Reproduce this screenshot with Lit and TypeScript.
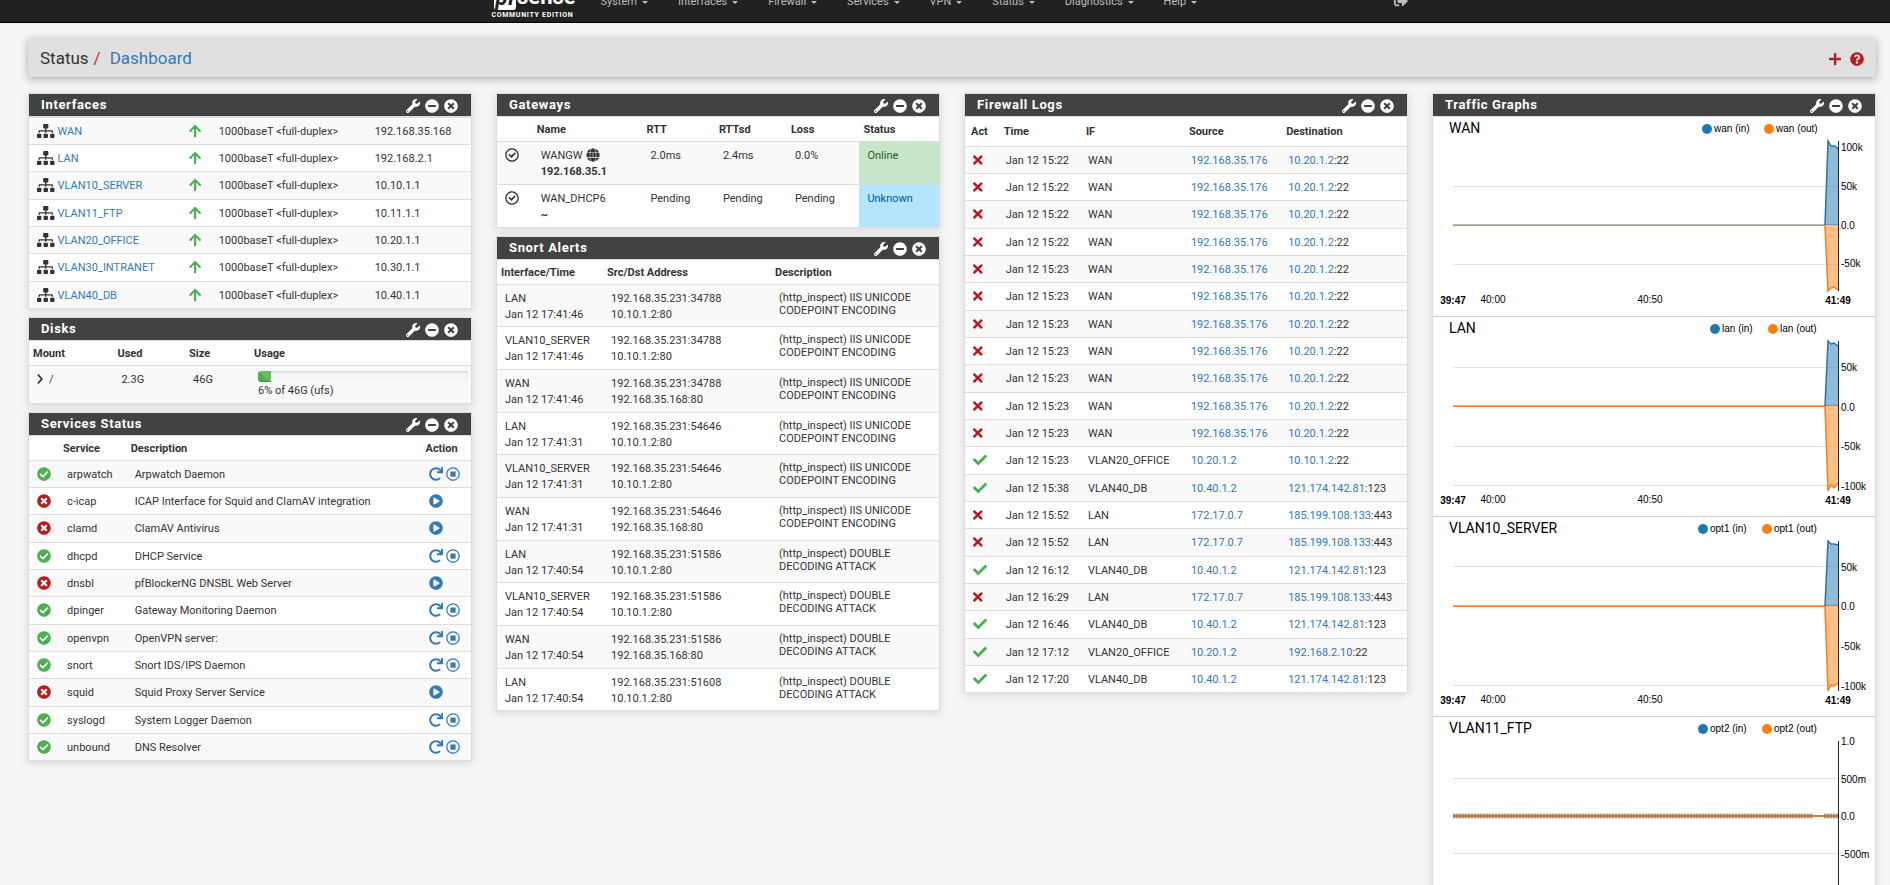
import { LitElement, html, svg, css } from "lit";
import { customElement, property } from "lit/decorators.js";

const CIRCLE = "M256 8C119 8 8 119 8 256s111 248 248 248 248-111 248-248S393 8 256 8z";

const ICONS: Record<string, { w: number; d: string }> = {
  wrench: {
    w: 512,
    d: "M507.73 109.1c-2.24-9.03-13.54-12.09-20.12-5.51l-74.36 74.36-67.88-11.31-11.31-67.88 74.36-74.36c6.62-6.62 3.43-17.9-5.66-20.16-47.38-11.74-99.55.91-136.58 37.93-39.64 39.64-50.55 97.1-34.05 147.2L18.74 402.76c-24.99 24.99-24.99 65.51 0 90.5 24.99 24.99 65.51 24.99 90.5 0l213.21-213.21c50.12 16.71 107.47 5.68 147.37-34.22 37.07-37.07 49.7-89.32 37.91-136.73zM64 472c-13.25 0-24-10.75-24-24 0-13.26 10.75-24 24-24s24 10.74 24 24c0 13.25-10.75 24-24 24z",
  },
  minus: {
    w: 512,
    d: CIRCLE + "M124 296c-6.6 0-12-5.4-12-12v-56c0-6.6 5.4-12 12-12h264c6.6 0 12 5.4 12 12v56c0 6.6-5.4 12-12 12H124z",
  },
  stopped: {
    w: 512,
    d: "M256 8C119 8 8 119 8 256s111 248 248 248 248-111 248-248S393 8 256 8zm121.6 313.1c4.7 4.7 4.7 12.3 0 17L338 377.6c-4.7 4.7-12.3 4.7-17 0L256 312l-65.1 65.6c-4.7 4.7-12.3 4.7-17 0L134.4 338c-4.7-4.7-4.7-12.3 0-17l65.6-65-65.6-65.1c-4.7-4.7-4.7-12.3 0-17l39.6-39.6c4.7-4.7 12.3-4.7 17 0l65 65.7 65.1-65.6c4.7-4.7 12.3-4.7 17 0l39.6 39.6c4.7 4.7 4.7 12.3 0 17L312 256l65.6 65.1z",
  },
  running: {
    w: 512,
    d: "M504 256c0 136.967-111.033 248-248 248S8 392.967 8 256 119.033 8 256 8s248 111.033 248 248zM227.314 387.314l184-184c6.248-6.248 6.248-16.379 0-22.627l-22.627-22.627c-6.248-6.249-16.379-6.249-22.628 0L216 308.118l-70.059-70.059c-6.248-6.248-16.379-6.248-22.628 0l-22.627 22.627c-6.248 6.248-6.248 16.379 0 22.627l104 104c6.249 6.249 16.379 6.249 22.628.001z",
  },
  sitemap: {
    w: 640,
    d: "M128 352H32c-17.67 0-32 14.33-32 32v96c0 17.67 14.33 32 32 32h96c17.67 0 32-14.33 32-32v-96c0-17.67-14.33-32-32-32zm-24-80h192v48h48v-48h192v48h48v-57.59c0-21.17-17.23-38.41-38.41-38.41H344v-64h40c17.67 0 32-14.33 32-32V32c0-17.67-14.33-32-32-32H256c-17.67 0-32 14.33-32 32v96c0 17.67 14.33 32 32 32h40v64H94.41C73.23 224 56 241.23 56 262.41V320h48v-48zm264 80h-96c-17.67 0-32 14.33-32 32v96c0 17.67 14.33 32 32 32h96c17.67 0 32-14.33 32-32v-96c0-17.67-14.33-32-32-32zm240 0h-96c-17.67 0-32 14.33-32 32v96c0 17.67 14.33 32 32 32h96c17.67 0 32-14.33 32-32v-96c0-17.67-14.33-32-32-32z",
  },
  up: {
    w: 448,
    d: "M34.9 289.5l-22.2-22.2c-9.4-9.4-9.4-24.6 0-33.9L207 39c9.4-9.4 24.6-9.4 33.9 0l194.3 194.3c9.4 9.4 9.4 24.6 0 33.9L413 289.4c-9.5 9.5-25 9.3-34.3-.4L264 168.6V456c0 13.3-10.7 24-24 24h-32c-13.3 0-24-10.7-24-24V168.6L69.2 289.1c-9.3 9.8-24.8 10-34.3.4z",
  },
  times: {
    w: 352,
    d: "M242.72 256l100.07-100.07c12.28-12.28 12.28-32.19 0-44.48l-22.24-22.24c-12.28-12.28-32.19-12.28-44.48 0L176 189.28 75.93 89.21c-12.28-12.28-32.19-12.28-44.48 0L9.21 111.45c-12.28 12.28-12.28 32.19 0 44.48L109.28 256 9.21 356.07c-12.28 12.28-12.28 32.19 0 44.48l22.24 22.24c12.28 12.28 32.2 12.28 44.48 0L176 322.72l100.07 100.07c12.28 12.28 32.2 12.28 44.48 0l22.24-22.24c12.28-12.28 12.28-32.19 0-44.48L242.72 256z",
  },
  check: {
    w: 512,
    d: "M173.898 439.404l-166.4-166.4c-9.997-9.997-9.997-26.206 0-36.204l36.203-36.204c9.997-9.998 26.207-9.998 36.204 0L192 312.69 432.095 72.596c9.997-9.997 26.207-9.997 36.204 0l36.203 36.204c9.997 9.997 9.997 26.206 0 36.204l-294.4 294.401c-9.998 9.997-26.207 9.997-36.204-.001z",
  },
  redo: {
    w: 512,
    d: "M500.33 0h-47.41a12 12 0 0 0-12 12.57l4 82.76A247.42 247.42 0 0 0 256 8C119.34 8 7.9 119.53 8 256.19 8.1 393.07 119.1 504 256 504a247.1 247.1 0 0 0 166.18-63.91 12 12 0 0 0 .48-17.43l-34-34a12 12 0 0 0-16.38-.55A176 176 0 1 1 402.1 157.8l-101.53-4.87a12 12 0 0 0-12.57 12v47.41a12 12 0 0 0 12 12h200.33a12 12 0 0 0 12-12V12a12 12 0 0 0-12-12z",
  },
  stop: {
    w: 512,
    d: CIRCLE + "M256 52a204 204 0 1 1 0 408a204 204 0 1 1 0-408zM176 160h160q16 0 16 16v160q0 16-16 16H176q-16 0-16-16V176q0-16 16-16z",
  },
  play: {
    w: 512,
    d: "M371.7 238l-176-107c-15.8-8.8-35.7 2.5-35.7 21v208c0 18.4 19.8 29.8 35.7 21l176-101c16.4-9.1 16.4-32.8 0-42zM504 256C504 119 393 8 256 8S8 119 8 256s111 248 248 248 248-111 248-248z",
  },
  enabled: {
    w: 512,
    d: CIRCLE + "M256 56a200 200 0 1 1 0 400a200 200 0 1 1 0-400zM232 358L130 256q-8-9 0-17l24-23q9-8 17 0l62 62 115-114q9-8 17 0l23 23q8 9 0 17L249 358q-9 8-17 0z",
  },
  globe: {
    w: 512,
    d: "M138 160q10-88 52-144Q78 56 33 160zM356 160Q336 16 256 8q-80 8-100 152zM479 160Q434 56 322 16q42 56 52 144zM486 180H376q4 76 0 152h110q20-76 0-152zM136 256q0-40 3-76H26q-20 76 0 152h113q-3-36-3-76zM156 180q-4 76 0 152h90V180zM266 180v152h90q4-76 0-152zM156 352q20 144 100 152 80-8 100-152zM322 496q112-40 157-144H374q-10 88-52 144zM33 352q45 104 157 144-42-56-52-144z",
  },
  plus: {
    w: 448,
    d: "M416 212H268V64q0-32-32-32h-24q-32 0-32 32v148H32q-32 0-32 32v24q0 32 32 32h148v148q0 32 32 32h24q32 0 32-32V300h148q32 0 32-32v-24q0-32-32-32z",
  },
  help: {
    w: 512,
    d: "M504 256c0 136.997-111.043 248-248 248S8 392.997 8 256C8 119.083 119.043 8 256 8s248 111.083 248 248zM262.655 90c-54.497 0-89.255 22.957-116.549 63.758-3.536 5.286-2.353 12.415 2.715 16.258l34.699 26.31c5.205 3.947 12.621 3.008 16.665-2.122 17.864-22.658 30.113-35.797 57.303-35.797 20.429 0 45.698 13.148 45.698 32.958 0 14.976-12.363 22.667-32.534 33.976C247.128 238.528 216 254.941 216 296v4c0 6.627 5.373 12 12 12h56c6.627 0 12-5.373 12-12v-1.333c0-28.462 83.186-29.647 83.186-106.667 0-58.002-60.165-102-116.531-102zM256 338c-25.365 0-46 20.635-46 46 0 25.364 20.635 46 46 46s46-20.636 46-46c0-25.365-20.635-46-46-46z",
  },
  signout: {
    w: 512,
    d: "M497 273L329 441c-15 15-41 4.5-41-17v-96H152c-13.3 0-24-10.7-24-24v-96c0-13.3 10.7-24 24-24h136V88c0-21.4 25.9-32 41-17l168 168c9.3 9.4 9.3 24.6 0 34zM192 436v-40c0-6.6-5.4-12-12-12H96c-17.7 0-32-14.3-32-32V160c0-17.7 14.3-32 32-32h84c6.6 0 12-5.4 12-12V76c0-6.6-5.4-12-12-12H96c-53 0-96 43-96 96v192c0 53 43 96 96 96h84c6.6 0 12-5.4 12-12z",
  },
  chevron: {
    w: 256,
    d: "M24 76q-14 14 0 28l140 152L24 408q-14 14 0 28l22 22q14 14 28 0l168-186q14-16 0-32L74 54q-14-14-28 0z",
  },
};

const icon = (name: string, cls = "") => html`<svg
  class="icon ${cls}"
  viewBox="0 0 ${ICONS[name].w} 512"
  aria-hidden="true"
>
  <path fill="currentColor" fill-rule="evenodd" d=${ICONS[name].d}></path>
</svg>`;

const iconStyles = css`
  .icon {
    height: 14px;
    display: block;
    flex: none;
  }
`;

@customElement("dash-panel")
class DashPanel extends LitElement {
  @property() heading = "";

  static styles = [
    iconStyles,
    css`
      :host {
        display: block;
        background: #fff;
        border: 1px solid #ddd;
        box-shadow: 0 2px 8px rgba(0, 0, 0, 0.12);
      }
      header {
        display: flex;
        align-items: center;
        justify-content: space-between;
        height: 22px;
        padding: 0 13px 0 12px;
        background: #424242;
        color: #fff;
        border-bottom: 1px solid #ddd;
      }
      h2 {
        margin: 0;
        font-size: 13px;
        line-height: 22px;
        font-weight: 700;
        letter-spacing: 0.05em;
      }
      .tools {
        display: flex;
        gap: 5px;
        padding-top: 2px;
      }
      button {
        border: 0;
        padding: 0;
        background: none;
        color: inherit;
        cursor: pointer;
      }
    `,
  ];

  render() {
    return html`<header>
        <h2>${this.heading}</h2>
        <div class="tools">
          <button aria-label="Settings">${icon("wrench")}</button>
          <button aria-label="Minimize">${icon("minus")}</button>
          <button aria-label="Close">${icon("stopped")}</button>
        </div>
      </header>
      <slot></slot>`;
  }
}

type Point = [number, number];
interface Graph {
  name: string;
  key: string;
  keyX: [number, number];
  zero: number;
  grid: number[];
  ticks: [string, number][];
  inbound: Point[];
  outbound: Point[];
}

const GRAPHS: Graph[] = [
  {
    name: "WAN", key: "wan", keyX: [274, 336], zero: 108, grid: [69, 147],
    ticks: [["100k", 30], ["50k", 69], ["0.0", 108], ["-50k", 146]],
    inbound: [[392, 108], [395, 24], [398, 29], [402, 29], [405, 32]],
    outbound: [[392, 108], [395, 174], [398, 171], [401, 170], [405, 173]],
  },
  {
    name: "LAN", key: "lan", keyX: [282, 340], zero: 89, grid: [50, 129, 168],
    ticks: [["50k", 50], ["0.0", 90], ["-50k", 129], ["-100k", 169]],
    inbound: [[392, 89], [395, 24], [398, 27], [401, 26], [405, 29]],
    outbound: [[392, 89], [395, 174], [398, 168], [401, 171], [405, 166]],
  },
  {
    name: "VLAN10_SERVER", key: "opt1", keyX: [270, 334], zero: 89, grid: [49, 168],
    ticks: [["50k", 50], ["0.0", 89], ["-50k", 129], ["-100k", 169]],
    inbound: [[392, 89], [395, 24], [398, 27], [401, 27], [405, 28]],
    outbound: [[392, 89], [395, 174], [398, 168], [401, 169], [405, 166]],
  },
  {
    name: "VLAN11_FTP", key: "opt2", keyX: [270, 334], zero: 99, grid: [61, 136],
    ticks: [["1.0", 24], ["500m", 62], ["0.0", 99], ["-500m", 137], ["-1.0", 174]],
    inbound: [], outbound: [],
  },
];

const pts = (list: Point[]) => list.map((p) => p.join(",")).join(" ");

@customElement("traffic-graph")
class TrafficGraph extends LitElement {
  @property({ attribute: false }) data!: Graph;

  static styles = css`
    :host {
      display: block;
      border-bottom: 1px solid #ccc;
    }
    svg {
      display: block;
      width: 100%;
      font: 10px "Liberation Sans", Arial, sans-serif;
    }
    .name {
      font: 14px Roboto, sans-serif;
    }
    .bold {
      font-weight: 700;
      text-anchor: middle;
    }
    .mid {
      text-anchor: middle;
    }
    .grid {
      stroke: #e0e0e0;
      shape-rendering: crispEdges;
    }
  `;

  render() {
    const g = this.data;
    const idle = g.inbound.length === 0;
    return html`<svg viewBox="0 0 442 199" role="img" aria-label="${g.name} traffic">
      <text class="name" x="16" y="16">${g.name}</text>
      <circle cx=${g.keyX[0]} cy="12" r="5" fill="#1f77b4"></circle>
      <text x=${g.keyX[0] + 7} y="15">${g.key} (in)</text>
      <circle cx=${g.keyX[1]} cy="12" r="5" fill="#ff7f0e"></circle>
      <text x=${g.keyX[1] + 7} y="15">${g.key} (out)</text>
      ${g.grid.map((y) => svg`<line class="grid" x1="20" x2="405" y1=${y + 0.5} y2=${y + 0.5} />`)}
      ${idle
        ? svg`<path d="M20 ${g.zero}H405" stroke="#c9803c" stroke-width="2" />
            <path d="M20 ${g.zero}H380M391 ${g.zero}H405" stroke="#c9803c" stroke-width="3" />
            <path d="M20 ${g.zero}H380M391 ${g.zero}H405" stroke="#9b7a55" stroke-opacity=".6" stroke-width="5" stroke-dasharray="2 1" />`
        : svg`<line x1="20" x2="405" y1=${g.zero - 0.5} y2=${g.zero - 0.5} stroke="#bbb" shape-rendering="crispEdges" />
            <polygon points="${pts(g.inbound)} 405,${g.zero}" fill="#1f77b4" fill-opacity=".5" />
            <polyline points=${pts(g.inbound)} fill="none" stroke="#1f77b4" stroke-width="1.5" />
            <polygon points="${pts(g.outbound)} 405,${g.zero}" fill="#ff7f0e" fill-opacity=".5" />
            <polyline points=${pts(g.outbound)} fill="none" stroke="#ff7f0e" stroke-width="1.5" />
            <line x1="20" x2="392" y1=${g.zero + 0.5} y2=${g.zero + 0.5} stroke="#ff7f0e" shape-rendering="crispEdges" />`}
      <line x1="405.5" x2="405.5" y1="24" y2="174" stroke="#222" shape-rendering="crispEdges"></line>
      ${g.ticks.map(([t, y]) => svg`<text x="408" y=${y + 4}>${t}</text>`)}
      <text class="bold" x="20" y="187">39:47</text>
      <text class="mid" x="60" y="186">40:00</text>
      <text class="mid" x="217" y="186">40:50</text>
      <text class="bold" x="405" y="187">41:49</text>
    </svg>`;
  }
}

const NAV = ["System", "Interfaces", "Firewall", "Services", "VPN", "Status", "Diagnostics", "Help"];

const INTERFACES = [
  ["WAN", "192.168.35.168"],
  ["LAN", "192.168.2.1"],
  ["VLAN10_SERVER", "10.10.1.1"],
  ["VLAN11_FTP", "10.11.1.1"],
  ["VLAN20_OFFICE", "10.20.1.1"],
  ["VLAN30_INTRANET", "10.30.1.1"],
  ["VLAN40_DB", "10.40.1.1"],
];

const SERVICES: [string, string, boolean][] = [
  ["arpwatch", "Arpwatch Daemon", true],
  ["c-icap", "ICAP Interface for Squid and ClamAV integration", false],
  ["clamd", "ClamAV Antivirus", false],
  ["dhcpd", "DHCP Service", true],
  ["dnsbl", "pfBlockerNG DNSBL Web Server", false],
  ["dpinger", "Gateway Monitoring Daemon", true],
  ["openvpn", "OpenVPN server:", true],
  ["snort", "Snort IDS/IPS Daemon", true],
  ["squid", "Squid Proxy Server Service", false],
  ["syslogd", "System Logger Daemon", true],
  ["unbound", "DNS Resolver", true],
];

const UNICODE_ALERT = "(http_inspect) IIS UNICODE CODEPOINT ENCODING";
const DOUBLE_ALERT = "(http_inspect) DOUBLE DECODING ATTACK";
const ALERTS = [
  ["LAN", "17:41:46", "34788", "10.10.1.2:80", UNICODE_ALERT],
  ["VLAN10_SERVER", "17:41:46", "34788", "10.10.1.2:80", UNICODE_ALERT],
  ["WAN", "17:41:46", "34788", "192.168.35.168:80", UNICODE_ALERT],
  ["LAN", "17:41:31", "54646", "10.10.1.2:80", UNICODE_ALERT],
  ["VLAN10_SERVER", "17:41:31", "54646", "10.10.1.2:80", UNICODE_ALERT],
  ["WAN", "17:41:31", "54646", "192.168.35.168:80", UNICODE_ALERT],
  ["LAN", "17:40:54", "51586", "10.10.1.2:80", DOUBLE_ALERT],
  ["VLAN10_SERVER", "17:40:54", "51586", "10.10.1.2:80", DOUBLE_ALERT],
  ["WAN", "17:40:54", "51586", "192.168.35.168:80", DOUBLE_ALERT],
  ["LAN", "17:40:54", "51608", "10.10.1.2:80", DOUBLE_ALERT],
];

type Log = [boolean, string, string, string, string, string];
const blocked = (time: string): Log => [false, time, "WAN", "192.168.35.176", "10.20.1.2", "22"];
const LOGS: Log[] = [
  ...Array.from({ length: 4 }, () => blocked("15:22")),
  ...Array.from({ length: 7 }, () => blocked("15:23")),
  [true, "15:23", "VLAN20_OFFICE", "10.20.1.2", "10.10.1.2", "22"],
  [true, "15:38", "VLAN40_DB", "10.40.1.2", "121.174.142.81", "123"],
  [false, "15:52", "LAN", "172.17.0.7", "185.199.108.133", "443"],
  [false, "15:52", "LAN", "172.17.0.7", "185.199.108.133", "443"],
  [true, "16:12", "VLAN40_DB", "10.40.1.2", "121.174.142.81", "123"],
  [false, "16:29", "LAN", "172.17.0.7", "185.199.108.133", "443"],
  [true, "16:46", "VLAN40_DB", "10.40.1.2", "121.174.142.81", "123"],
  [true, "17:12", "VLAN20_OFFICE", "10.20.1.2", "192.168.2.10", "22"],
  [true, "17:20", "VLAN40_DB", "10.40.1.2", "121.174.142.81", "123"],
];

const cols = (widths: number[]) => html`<colgroup>
  ${widths.map((w) => html`<col style="width:${w}%" />`)}<col />
</colgroup>`;

const head = (names: string[]) => html`<thead>
  <tr>${names.map((n) => (n ? html`<th scope="col">${n}</th>` : html`<td></td>`))}</tr>
</thead>`;

@customElement("app-root")
class AppRoot extends LitElement {
  static styles = [
    iconStyles,
    css`
      :host {
        display: block;
        height: 100vh;
        overflow-y: auto;
        scrollbar-width: none;
        background: #f5f5f5;
        color: #333;
        font: 11px/16px Roboto, sans-serif;
      }
      * {
        box-sizing: border-box;
      }
      a {
        color: #337ab7;
        text-decoration: none;
      }
      .topbar {
        height: 23px;
        overflow: hidden;
        background: #212121;
        border-bottom: 1px solid #000;
        padding: 0 25.5% 0 26%;
        display: flex;
        align-items: flex-end;
      }
      .brand {
        display: flex;
        flex-direction: column;
        align-items: flex-start;
        width: 109px;
        padding-bottom: 2px;
        color: #fff;
        white-space: nowrap;
      }
      .logo {
        display: flex;
        align-items: flex-end;
        gap: 1px;
        font-size: 22px;
        font-weight: 700;
        line-height: 22px;
        padding-left: 3px;
      }
      .logo i {
        background: #fff;
        color: #212121;
        line-height: 24px;
        padding: 0 1px;
        border-radius: 3px;
      }
      .logo b {
        line-height: 26px;
        font-weight: 700;
      }
      .edition {
        font-size: 7px;
        line-height: 10px;
        font-weight: 700;
        letter-spacing: 0.1em;
      }
      nav {
        display: flex;
        gap: 30px;
        padding-bottom: 12px;
        flex: 1;
      }
      nav a,
      .logout {
        color: #bdbdbd;
      }
      nav a {
        display: flex;
        align-items: center;
        gap: 5px;
      }
      .caret {
        border: 3px solid transparent;
        border-top-color: currentColor;
        border-bottom: 0;
      }
      .logout {
        padding-bottom: 14px;
      }
      .crumbs {
        display: flex;
        align-items: center;
        justify-content: space-between;
        height: 39px;
        margin: 15px 14px 0 28px;
        padding: 0 12px;
        border-radius: 4px;
        background: #e0e0e0;
        box-shadow: 0 2px 8px rgba(0, 0, 0, 0.3);
      }
      .crumbs ol {
        display: flex;
        margin: 0;
        padding: 0;
        list-style: none;
        font-size: 17px;
        line-height: 24px;
      }
      .slash {
        color: #c62828;
        padding: 0 9px 0 5px;
      }
      .crumb-tools {
        display: flex;
        gap: 9px;
        padding-top: 2px;
        color: #b71c1c;
      }
      .crumb-tools a {
        color: inherit;
      }
      .columns {
        display: grid;
        grid-template-columns: repeat(4, minmax(0, 1fr));
        gap: 24px;
        align-items: start;
        margin: 16px 14px 0 28px;
      }
      .column {
        display: grid;
        gap: 8px;
      }
      table {
        width: 100%;
        table-layout: fixed;
        border-spacing: 0;
      }
      th {
        text-align: left;
        font-weight: 700;
        padding: 5px 4px 3px;
      }
      thead td {
        padding: 0;
      }
      tbody td {
        border-top: 1px solid #ddd;
        padding: 6px 8px 4px;
        vertical-align: top;
        white-space: nowrap;
      }
      tbody tr:nth-child(odd) {
        background: #f9f9f9;
      }
      .single tbody tr:nth-child(3n) td {
        padding-bottom: 5px;
      }
      .double tbody tr:nth-child(3n + 1) td {
        padding-bottom: 3px;
      }
      .logs th {
        padding: 7px 6px 6px;
      }
      .line {
        display: flex;
        align-items: center;
        height: 16px;
        gap: 3px;
      }
      .line .icon {
        margin-bottom: 2px;
      }
      .ok {
        color: #4caf50;
      }
      .bad {
        color: #b71c1c;
      }
      td.desc {
        white-space: normal;
        line-height: 13px;
      }
      td.online {
        background: #c8e6c9;
        color: #1b5e20;
      }
      td.unknown {
        background: #b3e5fc;
        color: #01579b;
      }
      .chevron {
        height: 12px;
        margin-right: 3px;
      }
      td.usage {
        padding: 5px 3px 4px 8px;
      }
      .bar {
        height: 11px;
        margin-bottom: 1px;
        border-radius: 3px;
        background: #f5f5f5;
        box-shadow: inset 0 1px 2px rgba(0, 0, 0, 0.15);
        overflow: hidden;
      }
      .fill {
        height: 100%;
        background: linear-gradient(45deg, #4caf50 50%, #66bb6a 50%);
        box-shadow: inset 0 -1px 0 rgba(0, 0, 0, 0.15);
      }
    `,
  ];

  private interfaces() {
    return html`<dash-panel heading="Interfaces">
      <table class="single">
        ${cols([34.5, 6.6, 35.3])}
        <tbody>
          ${INTERFACES.map(
            ([name, ip]) => html`<tr>
              <td><span class="line">${icon("sitemap")}<a href="#">${name}</a></span></td>
              <td><span class="line ok">${icon("up")}</span></td>
              <td>1000baseT &lt;full-duplex&gt;</td>
              <td>${ip}</td>
            </tr>`
          )}
        </tbody>
      </table>
    </dash-panel>`;
  }

  private disks() {
    return html`<dash-panel heading="Disks">
      <table>
        ${cols([19.1, 16.2, 14.7])} ${head(["Mount", "Used", "Size", "Usage"])}
        <tbody>
          <tr>
            <td><span class="line">${icon("chevron", "chevron")} /</span></td>
            <td>2.3G</td>
            <td>46G</td>
            <td class="usage">
              <div class="bar" role="progressbar" aria-valuenow="6" aria-label="Disk usage">
                <div class="fill" style="width:6%"></div>
              </div>
              6% of 46G (ufs)
            </td>
          </tr>
        </tbody>
      </table>
    </dash-panel>`;
  }

  private services() {
    return html`<dash-panel heading="Services Status">
      <table class="single">
        ${cols([6.8, 15.3, 66.7])} ${head(["", "Service", "Description", "Action"])}
        <tbody>
          ${SERVICES.map(
            ([name, text, up]) => html`<tr>
              <td><span class="line ${up ? "ok" : "bad"}">${icon(up ? "running" : "stopped")}</span></td>
              <td>${name}</td>
              <td>${text}</td>
              <td>
                <span class="line">
                  ${up
                    ? html`<a href="#" aria-label="Restart ${name}">${icon("redo")}</a
                        ><a href="#" aria-label="Stop ${name}">${icon("stop")}</a>`
                    : html`<a href="#" aria-label="Start ${name}">${icon("play")}</a>`}
                </span>
              </td>
            </tr>`
          )}
        </tbody>
      </table>
    </dash-panel>`;
  }

  private gateways() {
    return html`<dash-panel heading="Gateways">
      <table>
        ${cols([8.1, 24.8, 16.4, 16.3, 16.4])} ${head(["", "Name", "RTT", "RTTsd", "Loss", "Status"])}
        <tbody>
          <tr>
            <td><span class="line">${icon("enabled")}</span></td>
            <td><span class="line">WANGW ${icon("globe")}</span><strong>192.168.35.1</strong></td>
            <td>2.0ms</td>
            <td>2.4ms</td>
            <td>0.0%</td>
            <td class="online">Online</td>
          </tr>
          <tr>
            <td><span class="line">${icon("enabled")}</span></td>
            <td>WAN_DHCP6<br /><strong>~</strong></td>
            <td>Pending</td>
            <td>Pending</td>
            <td>Pending</td>
            <td class="unknown">Unknown</td>
          </tr>
        </tbody>
      </table>
    </dash-panel>`;
  }

  private snort() {
    return html`<dash-panel heading="Snort Alerts">
      <table class="double">
        ${cols([24, 38])} ${head(["Interface/Time", "Src/Dst Address", "Description"])}
        <tbody>
          ${ALERTS.map(
            ([name, time, port, dst, text]) => html`<tr>
              <td>${name}<br />Jan 12 ${time}</td>
              <td>192.168.35.231:${port}<br />${dst}</td>
              <td class="desc">${text}</td>
            </tr>`
          )}
        </tbody>
      </table>
    </dash-panel>`;
  }

  private logs() {
    return html`<dash-panel heading="Firewall Logs">
      <table class="single logs">
        ${cols([7.4, 18.6, 23.3, 22])} ${head(["Act", "Time", "IF", "Source", "Destination"])}
        <tbody>
          ${LOGS.map(
            ([pass, time, name, src, dst, port]) => html`<tr>
              <td><span class="line ${pass ? "ok" : "bad"}">${icon(pass ? "check" : "times")}</span></td>
              <td>Jan 12 ${time}</td>
              <td>${name}</td>
              <td><a href="#">${src}</a></td>
              <td><a href="#">${dst}</a>:${port}</td>
            </tr>`
          )}
        </tbody>
      </table>
    </dash-panel>`;
  }

  render() {
    return html`
      <header class="topbar">
        <div class="brand">
          <div class="logo"><i>pf</i><b>sense</b></div>
          <div class="edition">COMMUNITY EDITION</div>
        </div>
        <nav>
          ${NAV.map((n) => html`<a href="#">${n}<span class="caret"></span></a>`)}
        </nav>
        <a class="logout" href="#" aria-label="Logout">${icon("signout")}</a>
      </header>
      <div class="crumbs">
        <ol>
          <li>Status<span class="slash">/</span></li>
          <li><a href="#">Dashboard</a></li>
        </ol>
        <div class="crumb-tools">
          <a href="#" aria-label="Add widget">${icon("plus")}</a>
          <a href="#" aria-label="Help">${icon("help")}</a>
        </div>
      </div>
      <main class="columns">
        <div class="column">${this.interfaces()}${this.disks()}${this.services()}</div>
        <div class="column">${this.gateways()}${this.snort()}</div>
        <div class="column">${this.logs()}</div>
        <div class="column">
          <dash-panel heading="Traffic Graphs">
            ${GRAPHS.map((g) => html`<traffic-graph .data=${g}></traffic-graph>`)}
          </dash-panel>
        </div>
      </main>
    `;
  }
}
